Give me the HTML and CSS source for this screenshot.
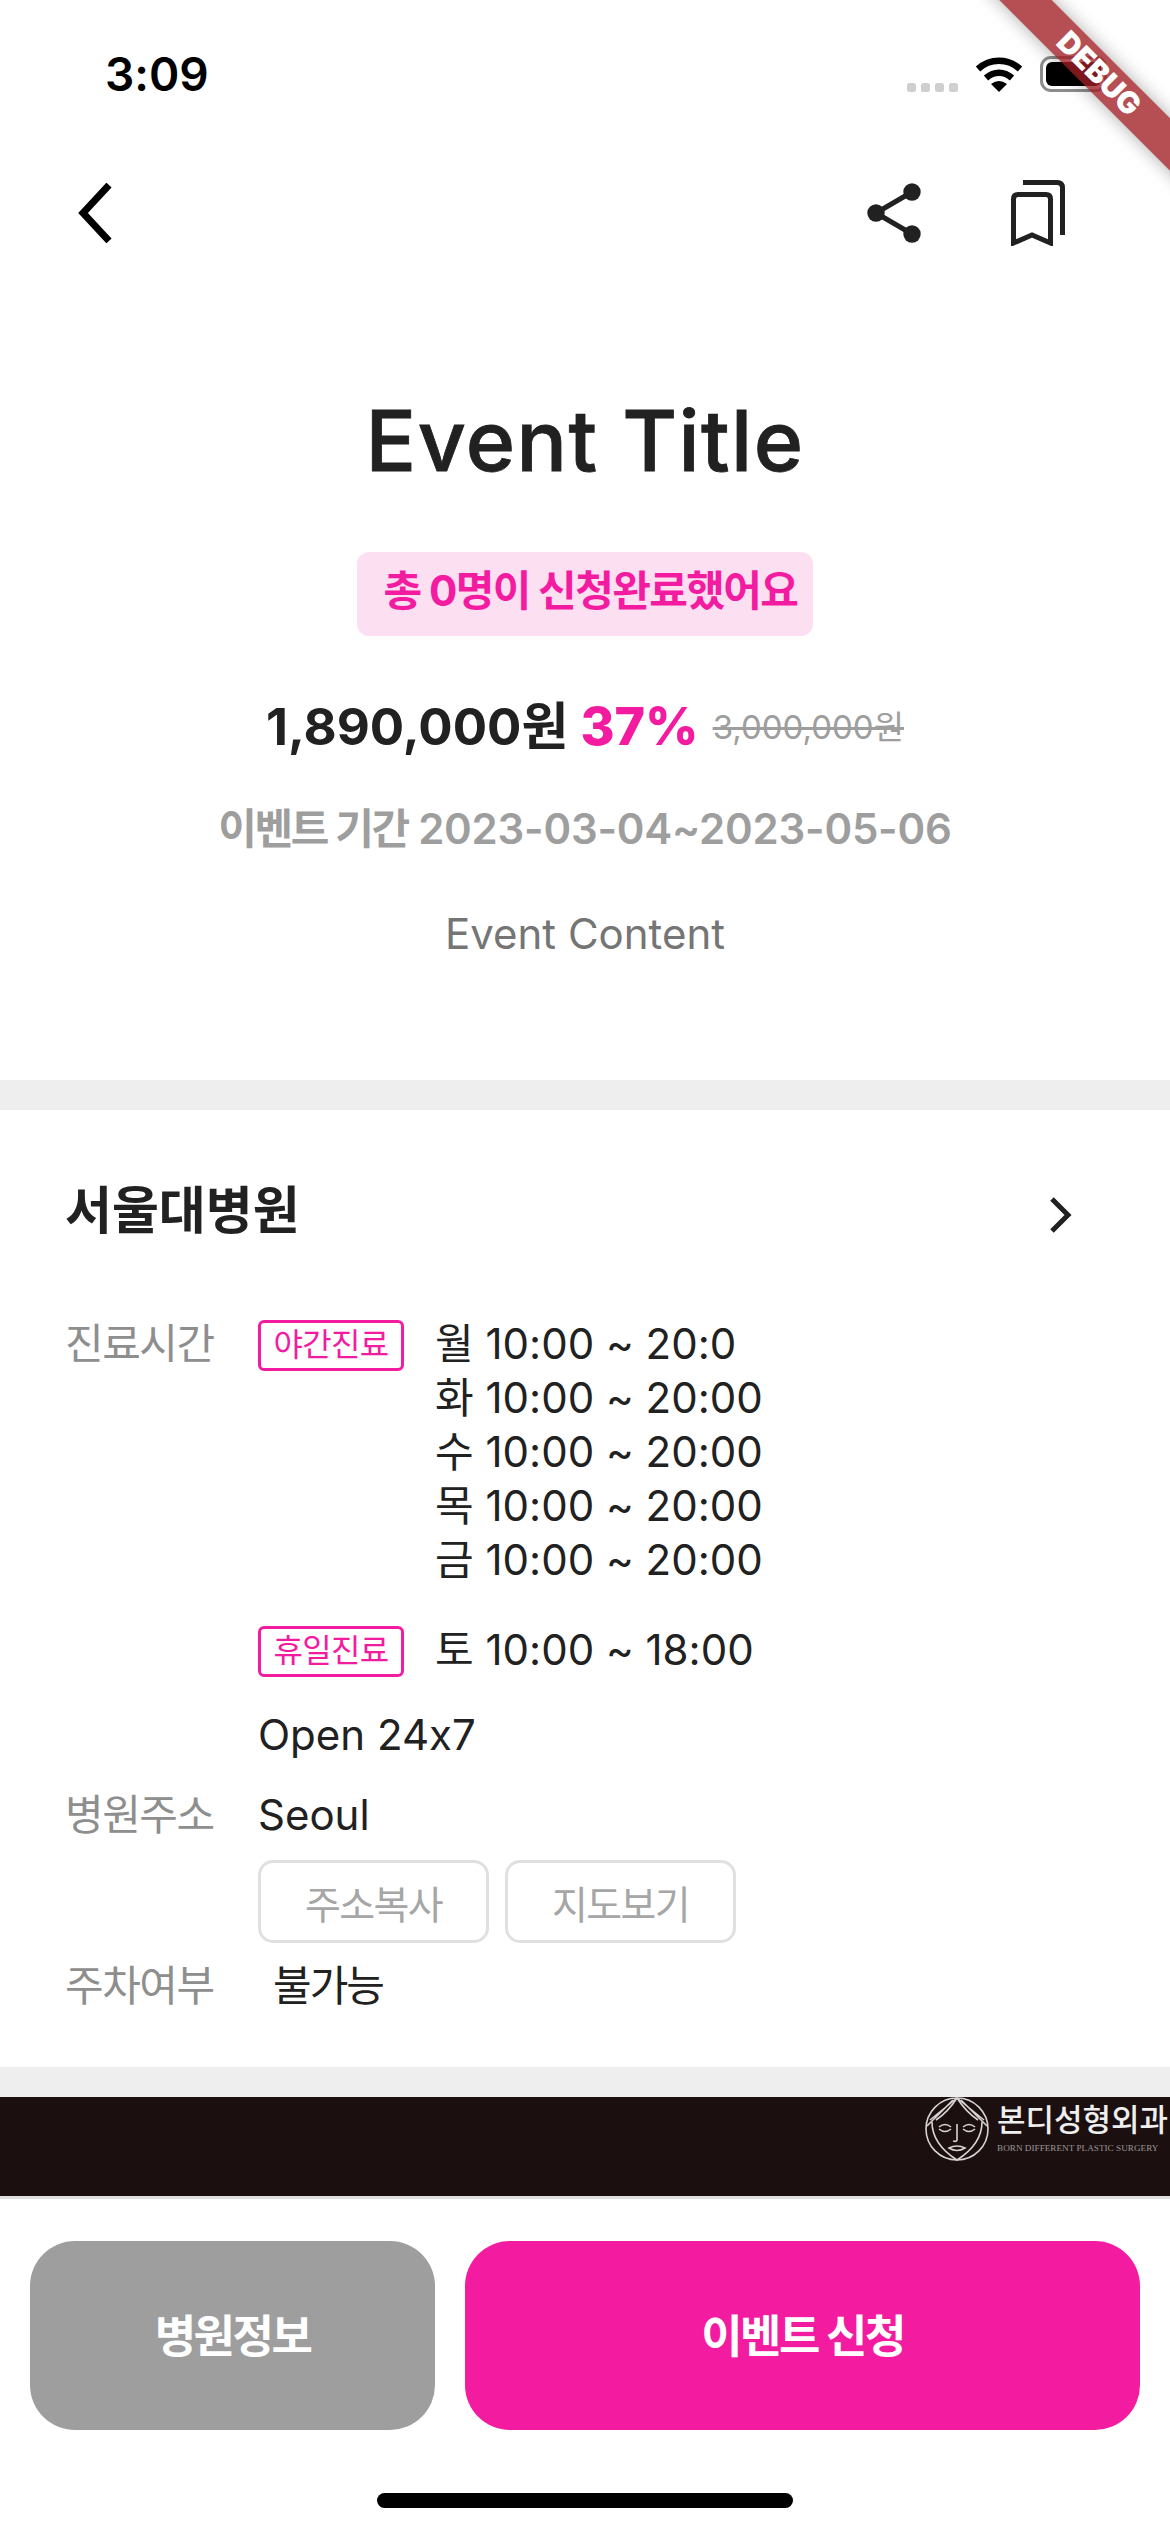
FILE: index.html
```html
<!DOCTYPE html>
<html lang="ko">
<head>
  <meta charset="UTF-8" />
  <meta name="viewport" content="width=device-width, initial-scale=1.0" />
  <title>Event Detail</title>
  <link rel="stylesheet" href="styles.css">
</head>
<body>
  <div class="phone">
    <div class="debug-banner"><span>DEBUG</span></div>

    <div class="status-bar">
      <span class="clock">3:09</span>
      <div class="status-icons">
        <svg class="signal" width="51" height="9" viewBox="0 0 51 9">
          <rect x="0" width="9" height="9" rx="2.5" />
          <rect x="14" width="9" height="9" rx="2.5" />
          <rect x="28" width="9" height="9" rx="2.5" />
          <rect x="42" width="9" height="9" rx="2.5" />
        </svg>
        <svg class="wifi" width="48" height="36" viewBox="0 0 48 36">
          <path d="M3 13C15 2 33 2 45 13" fill="none" stroke="#000" stroke-width="6.5" />
          <path d="M11 22C19 15 29 15 37 22" fill="none" stroke="#000" stroke-width="6.5" />
          <path d="M16 28Q24 22 32 28L24 36Z" fill="#000" />
        </svg>
        <div class="battery"><div class="battery-fill"></div></div>
      </div>
    </div>

    <div class="app-bar">
      <svg width="34" height="60" viewBox="0 0 34 60">
        <path d="M31 2L5 30L31 58" fill="none" stroke="#000" stroke-width="7" />
      </svg>
      <div class="app-actions">
        <svg width="54" height="60" viewBox="0 0 54 60">
          <path d="M9 30L45 9M9 30L45 51" fill="none" stroke="#212121" stroke-width="5" />
          <circle cx="9" cy="30" r="8.7" fill="#212121" />
          <circle cx="45" cy="9" r="8.7" fill="#212121" />
          <circle cx="45" cy="51" r="8.7" fill="#212121" />
        </svg>
        <svg width="54" height="66" viewBox="0 0 54 66">
          <path d="M12 2.5H46Q51.500 2.500 51.500 8V55" fill="none" stroke="#212121" stroke-width="5" />
          <path d="M2.500 63V19Q2.500 14.500 7 14.500H35Q39.500 14.500 39.500 19V63L21 55Z" fill="none" stroke="#212121" stroke-width="5" />
        </svg>
      </div>
    </div>

    <section class="event">
      <h1 class="event-title">Event Title</h1>
      <div class="event-count">총 0명이 신청완료했어요</div>
      <div class="event-price">
        <span class="price-now">1,890,000원</span>
        <span class="price-rate">37%</span>
        <span class="price-old">3,000,000원</span>
      </div>
      <div class="event-period"><span class="period-label">이벤트 기간</span> 2023-03-04~2023-05-06</div>
      <div class="event-content">Event Content</div>
    </section>

    <div class="divider"></div>

    <section class="hospital">
      <div class="hospital-head">
        <h2>서울대병원</h2>
        <svg class="hospital-arrow" width="23" height="36" viewBox="0 0 23 36">
          <path d="M3 2L19 18L3 34" fill="none" stroke="#212121" stroke-width="5" />
        </svg>
      </div>

      <div class="info-row">
        <div class="info-label">진료시간</div>
        <div class="hours">
          <span class="hours-tag">야간진료</span>
          <div class="hours-list">
            <div>월 10:00 ~ 20:0</div>
            <div>화 10:00 ~ 20:00</div>
            <div>수 10:00 ~ 20:00</div>
            <div>목 10:00 ~ 20:00</div>
            <div>금 10:00 ~ 20:00</div>
          </div>
        </div>
      </div>
      <div class="info-row holiday">
        <div class="info-label"></div>
        <div class="hours">
          <span class="hours-tag">휴일진료</span>
          <div class="hours-list">
            <div>토 10:00 ~ 18:00</div>
          </div>
        </div>
      </div>
      <div class="info-row open">
        <div class="info-label"></div>
        <div class="info-value">Open 24x7</div>
      </div>
      <div class="info-row address">
        <div class="info-label">병원주소</div>
        <div class="info-value">Seoul</div>
      </div>
      <div class="info-row address-btns">
        <div class="info-label"></div>
        <div class="btn-group">
          <button class="line-btn">주소복사</button>
          <button class="line-btn">지도보기</button>
        </div>
      </div>
      <div class="info-row parking">
        <div class="info-label">주차여부</div>
        <div class="info-value">불가능</div>
      </div>
    </section>

    <div class="divider"></div>

    <div class="ad-banner">
      <svg class="ad-face" width="66" height="66" viewBox="0 0 66 66">
        <g fill="none" stroke="#d8d4d4" stroke-width="1.600">
          <circle cx="33" cy="33" r="31" />
          <path d="M33 2L6 24M33 2L60 24M29 4L3 30M37 4L63 30" />
          <path d="M8 26Q8 48 33 64Q58 48 58 26" />
          <path d="M33 2Q24 16 12 24M33 2Q42 16 54 24" />
          <path d="M15 31Q21 26 27 31M39 31Q45 26 51 31" />
          <path d="M15 33Q21 38 27 33M39 33Q45 38 51 33" />
          <path d="M33 28V44Q33 46 29 45" />
          <path d="M25 52Q33 48 41 52Q33 57 25 52Z" />
        </g>
      </svg>
      <div class="ad-text">
        <div class="ad-name">본디성형외과</div>
        <div class="ad-sub">BORN DIFFERENT PLASTIC SURGERY</div>
      </div>
    </div>

    <div class="bottom-bar">
      <div class="bottom-btns">
        <button class="cta cta-info">병원정보</button>
        <button class="cta cta-apply">이벤트 신청</button>
      </div>
      <div class="home-bar"></div>
    </div>
  </div>
</body>
</html>
```

FILE: styles.css
```css
* {
  box-sizing: border-box;
}
body {
  margin: 0;
  padding: 0;
  background: #fff;
  color: #212121;
  font-family: Inter, "Noto Sans CJK KR", sans-serif;
  font-feature-settings: "calt" 0;
}
h1, h2 {
  margin: 0;
}
button {
  font-family: inherit;
  font-feature-settings: inherit;
  padding: 0;
  cursor: pointer;
}
svg {
  display: block;
}
.phone {
  position: relative;
  width: 1170px;
  height: 2532px;
  overflow: hidden;
  background: #fff;
}

/* flutter debug ribbon */
.debug-banner {
  position: absolute;
  top: 55px;
  left: 899px;
  width: 400px;
  height: 37px;
  transform: rotate(45deg);
  background: rgba(160, 30, 35, 0.78);
  box-shadow: 0 0 18px rgba(0, 0, 0, 0.32);
  color: #fff;
  font-size: 30px;
  font-weight: 900;
  line-height: 37px;
  text-align: center;
  z-index: 5;
}

.status-bar {
  display: flex;
  justify-content: space-between;
  height: 141px;
  padding: 50px 63px 0 105px;
}
.clock {
  font-size: 46px;
  font-weight: 600;
  line-height: 48px;
  color: #000;
}
.status-icons {
  display: flex;
  align-items: flex-end;
  height: 37px;
  margin-top: 5px;
}
.signal {
  fill: #cfcfcf;
  margin-right: 17px;
}
.wifi {
  margin-right: 17px;
}
.battery {
  width: 67px;
  height: 36px;
  padding: 3px;
  border: 3px solid #8c8c8c;
  border-radius: 11px;
}
.battery-fill {
  height: 100%;
  background: #000;
  border-radius: 6px;
}

.app-bar {
  display: flex;
  justify-content: space-between;
  align-items: center;
  height: 144px;
  padding: 0 105px 0 78px;
}
.app-actions {
  display: flex;
  align-items: center;
  gap: 90px;
}

.event {
  display: flex;
  flex-direction: column;
  align-items: center;
  padding: 111px 0 116px;
}
.event-title {
  font-size: 84px;
  font-weight: 500;
  -webkit-text-stroke: 0.8px #212121;
  letter-spacing: 1.4px;
  line-height: 90px;
}
.event-count {
  margin-top: 66px;
  padding: 0 16px 0 27px;
  height: 84px;
  background: #fddff2;
  border-radius: 12px;
  color: #f31ca0;
  font-size: 42px;
  font-weight: 700;
  letter-spacing: -1.6px;
  line-height: 78px;
}
.event-price {
  display: flex;
  align-items: center;
  gap: 14px;
  margin-top: 56px;
  line-height: 70px;
}
.price-now {
  margin-right: -2px;
  font-size: 51px;
  font-weight: 700;
}
.price-rate {
  font-size: 52px;
  font-weight: 800;
  color: #f31ca0;
}
.price-old {
  font-size: 33px;
  color: #9e9e9e;
  text-decoration: line-through;
}
.event-period {
  margin-top: 37px;
  font-size: 42px;
  font-weight: 600;
  letter-spacing: -0.2px;
  line-height: 60px;
  color: #9e9e9e;
}
.period-label {
  letter-spacing: -2.4px;
}
.event-content {
  margin-top: 45px;
  font-size: 42px;
  line-height: 60px;
  color: #757575;
}

.divider {
  height: 30px;
  background: #eee;
}

.hospital {
  height: 957px;
  padding: 62px 67px 0 65px;
}
.hospital-head {
  display: flex;
  justify-content: space-between;
  align-items: center;
  height: 70px;
  padding-right: 31px;
  margin-bottom: 75px;
}
.hospital-head h2 {
  font-size: 51px;
  font-weight: 700;
}
.hospital-arrow {
  margin-top: 16px;
}
.info-row {
  display: grid;
  grid-template-columns: 193px 1fr;
  font-size: 42px;
  line-height: 54px;
}
.info-label {
  color: #8e8e8e;
  letter-spacing: -1.5px;
}
.hours {
  display: flex;
  align-items: flex-start;
  gap: 31px;
}
.hours-tag {
  width: 146px;
  height: 51px;
  margin-top: 3px;
  border: 3px solid #f31ca0;
  border-radius: 6px;
  color: #f31ca0;
  font-size: 32px;
  letter-spacing: -0.7px;
  line-height: 43px;
  text-align: center;
}
.holiday {
  margin-top: 36px;
}
.open {
  margin-top: 31px;
}
.address {
  margin-top: 26px;
}
.address-btns {
  margin-top: 18px;
}
.parking {
  margin-top: 16px;
}
.parking .info-value {
  padding-left: 15px;
  letter-spacing: -2px;
}
.btn-group {
  display: flex;
  gap: 16px;
}
.line-btn {
  width: 231px;
  height: 83px;
  background: #fff;
  border: 3px solid #e0e0e0;
  border-radius: 15px;
  color: #a6a6a6;
  font-size: 39px;
  letter-spacing: -1.6px;
}

.ad-banner {
  display: flex;
  justify-content: flex-end;
  align-items: flex-start;
  height: 102px;
  background: #1b0f10;
  border-bottom: 3px solid #e0e0e0;
  gap: 7px;
}
.ad-face {
  margin-top: -1px;
}
.ad-text {
  width: 173px;
  color: #eee;
}
.ad-name {
  margin-top: 3px;
  font-size: 31px;
  font-weight: 500;
  line-height: 40px;
  white-space: nowrap;
}
.ad-sub {
  margin-top: 1px;
  font-family: "Liberation Serif", serif;
  font-size: 9.200px;
  line-height: 14px;
  color: #9a9595;
  white-space: nowrap;
}

.bottom-bar {
  padding-top: 42px;
}
.bottom-btns {
  display: grid;
  grid-template-columns: 405px 675px;
  gap: 30px;
  padding: 0 30px;
}
.cta {
  height: 189px;
  padding-bottom: 5px;
  border: none;
  border-radius: 45px;
  color: #fff;
  font-size: 45px;
  font-weight: 700;
  letter-spacing: -2.5px;
}
.cta-info {
  background: #9e9e9e;
}
.cta-apply {
  background: #f31ca0;
}
.home-bar {
  width: 416px;
  height: 15px;
  margin: 63px auto 0;
  background: #000;
  border-radius: 8px;
}
```
